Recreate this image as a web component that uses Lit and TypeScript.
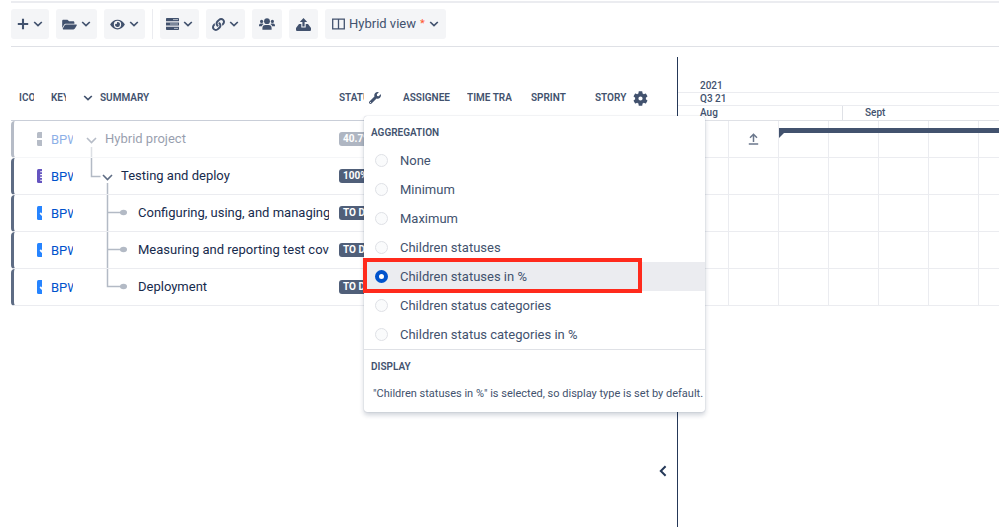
import { LitElement, html, css, svg, nothing } from "lit";
import { customElement, property, state } from "lit/decorators.js";
import { classMap } from "lit/directives/class-map.js";

const icons: Record<string, { box: string; w: number; h: number; art: unknown }> = {
  plus: { box: "0 0 12 12", w: 12, h: 12, art: svg`<path d="M6 .8v10.4M.8 6h10.4" stroke="currentColor" stroke-width="2.1" fill="none"/>` },
  chevron: { box: "0 0 10 6", w: 10, h: 6, art: svg`<path d="M1.2 1 5 4.6 8.8 1" stroke="currentColor" stroke-width="1.7" fill="none"/>` },
  left: { box: "0 0 8 12", w: 8, h: 12, art: svg`<path d="M6.6 1.2 1.8 6l4.8 4.8" stroke="currentColor" stroke-width="2" fill="none"/>` },
  folder: { box: "0 0 576 512", w: 15, h: 13, art: svg`<path d="M572.694 292.093L500.27 416.248A63.997 63.997 0 0 1 444.989 448H45.025c-18.523 0-30.064-20.093-20.731-36.093l72.424-124.155A64 64 0 0 1 152 256h399.964c18.523 0 30.064 20.093 20.73 36.093zM152 224h328v-48c0-26.51-21.49-48-48-48H272l-64-64H48C21.49 64 0 85.49 0 112v278.046l69.077-118.418C86.214 242.25 117.989 224 152 224z"/>` },
  eye: { box: "0 0 576 512", w: 15, h: 13, art: svg`<path d="M572.52 241.4C518.29 135.59 410.93 64 288 64S57.68 135.64 3.48 241.41a32.35 32.35 0 0 0 0 29.19C57.71 376.41 165.07 448 288 448s230.32-71.64 284.52-177.41a32.35 32.35 0 0 0 0-29.19zM288 400a144 144 0 1 1 144-144 143.93 143.93 0 0 1-144 144zm0-240a95.31 95.31 0 0 0-25.31 3.79 47.85 47.85 0 0 1-66.9 66.9A95.78 95.78 0 1 0 288 160z"/>` },
  rows: { box: "0 0 13 12", w: 13, h: 12, art: svg`<path d="M0 .8Q0 0 .8 0h11.4q.8 0 .8.8v2.4H0zM0 4.4h13v3.2H0zM0 8.8h13v2.4q0 .8-.8.8H.8Q0 12 0 11.2z"/><path d="M7 1.6h5M4 6h8M8 10.4h4" stroke="#c1c7d0" stroke-width=".9"/>` },
  link: { box: "0 0 512 512", w: 13, h: 13, art: svg`<path d="M326.612 185.391c59.747 59.809 58.927 155.698.36 214.59-.11.12-.24.25-.36.37l-67.2 67.2c-59.27 59.27-155.699 59.262-214.96 0-59.27-59.26-59.27-155.7 0-214.96l37.106-37.106c9.84-9.84 26.786-3.3 27.294 10.606.648 17.722 3.826 35.527 9.69 52.721 1.986 5.822.567 12.262-3.783 16.612l-13.087 13.087c-28.026 28.026-28.905 73.66-1.155 101.96 28.024 28.579 74.086 28.749 102.325.51l67.2-67.19c28.191-28.191 28.073-73.757 0-101.83-3.701-3.694-7.429-6.564-10.341-8.569a16.037 16.037 0 0 1-6.947-12.606c-.396-10.567 3.348-21.456 11.698-29.806l21.054-21.055c5.521-5.521 14.182-6.199 20.584-1.731a152.482 152.482 0 0 1 20.522 17.197zM467.547 44.449c-59.261-59.262-155.69-59.27-214.96 0l-67.2 67.2c-.12.12-.25.25-.36.37-58.566 58.892-59.387 154.781.36 214.59a152.454 152.454 0 0 0 20.521 17.196c6.402 4.468 15.064 3.789 20.584-1.731l21.054-21.055c8.35-8.35 12.094-19.239 11.698-29.806a16.037 16.037 0 0 0-6.947-12.606c-2.912-2.005-6.64-4.875-10.341-8.569-28.073-28.073-28.191-73.639 0-101.83l67.2-67.19c28.239-28.239 74.3-28.069 102.325.51 27.75 28.3 26.872 73.934-1.155 101.96l-13.087 13.087c-4.35 4.35-5.769 10.79-3.783 16.612 5.864 17.194 9.042 34.999 9.69 52.721.509 13.906 17.454 20.446 27.294 10.606l37.106-37.106c59.271-59.259 59.271-155.699.001-214.959z"/>` },
  users: { box: "0 0 16 12", w: 16, h: 12, art: svg`<circle cx="8" cy="3.2" r="2.9"/><circle cx="2.6" cy="3.4" r="1.6"/><circle cx="13.4" cy="3.4" r="1.6"/><path d="M3.4 11.8v-1.6q0-3.2 3-3.2h3.2q3 0 3 3.2v1.6zM0 8.3V7.4q0-1.8 1.8-1.8h1.8q.6 0 1 .3-1.5.8-1.8 2.4zM16 8.3V7.4q0-1.8-1.8-1.8h-1.8q-.6 0-1 .3 1.5.8 1.8 2.4z"/>` },
  share: { box: "0 0 15 13", w: 15, h: 13, art: svg`<path d="M7.5 0 11.200 4H8.600v4.600H6.400V4H3.800zM3 6h2.300v3.600h4.400V6H12l3 4v1.900q0 1.100-1.100 1.100H1.100Q0 13 0 11.900V10z"/>` },
  columns: { box: "0 0 13 12", w: 13, h: 12, art: svg`<path d="M.7 1.100h11.600v9.800H.7zM6.500 1v10" fill="none" stroke="currentColor" stroke-width="1.300"/>` },
  wrench: { box: "0 0 512 512", w: 12, h: 12, art: svg`<path d="M507.73 109.1c-2.24-9.03-13.54-12.09-20.12-5.51l-74.36 74.36-67.88-11.31-11.31-67.88 74.36-74.36c6.62-6.62 3.43-17.9-5.66-20.16-47.38-11.74-99.55.91-136.58 37.93-39.64 39.64-50.55 97.1-34.05 147.2L18.74 402.76c-24.99 24.99-24.99 65.51 0 90.5 24.99 24.99 65.51 24.99 90.5 0l213.21-213.21c50.12 16.71 107.47 5.68 147.37-34.22 37.07-37.07 49.7-89.32 37.91-136.73zM64 472c-13.25 0-24-10.75-24-24 0-13.26 10.75-24 24-24s24 10.740 24 24c0 13.250-10.750 24-24 24z"/>` },
  gear: { box: "2 2 20 20", w: 15, h: 15, art: svg`<path d="M19.140 12.940c.04-.3.06-.61.06-.94 0-.32-.02-.64-.07-.94l2.030-1.580a.49.49 0 0 0 .12-.61l-1.920-3.320a.488.488 0 0 0-.59-.22l-2.390.96c-.5-.38-1.030-.7-1.620-.94l-.36-2.540a.484.484 0 0 0-.48-.41h-3.840c-.24 0-.43.17-.47.41l-.36 2.540c-.59.24-1.130.57-1.620.94l-2.390-.96c-.22-.08-.47 0-.59.22L2.740 8.870c-.12.21-.08.47.12.61l2.030 1.580c-.05.3-.09.63-.09.94s.02.64.07.94l-2.030 1.580a.49.49 0 0 0-.12.61l1.920 3.320c.12.22.37.29.59.22l2.390-.96c.5.38 1.030.7 1.620.94l.36 2.540c.05.24.24.41.48.41h3.840c.24 0 .44-.17.47-.41l.36-2.540c.59-.24 1.130-.56 1.620-.94l2.390.96c.22.08.47 0 .59-.22l1.920-3.320c.12-.22.07-.47-.12-.61zM12 14.800A2.800 2.800 0 1 1 12 9.200a2.800 2.800 0 0 1 0 5.600z"/>` },
  upload: { box: "0 0 11 12", w: 11, h: 12, art: svg`<path d="M5.500 9V1.500M2 4.800 5.500 1.300 9 4.800M.8 11h9.400" fill="none" stroke="currentColor" stroke-width="1.500"/>` },
  project: { box: "0 0 14 14", w: 14, h: 14, art: svg`<path d="M1.500 0H6v6H0V1.500Q0 0 1.500 0zM0 8h6v6H1.500Q0 14 0 12.500zM8 0h6v6H8zM8 8h6v6H8z" fill="#5e6c84"/>` },
  epic: { box: "0 0 14 14", w: 14, h: 14, art: svg`<rect width="14" height="14" rx="1.500" fill="#6554c0"/><path d="M3.200 2.800h8M3.200 5.600h8M3.200 8.400h8M3.200 11.200h8" stroke="#fff" stroke-width="1.100"/>` },
  task: { box: "0 0 14 14", w: 14, h: 14, art: svg`<rect width="14" height="14" rx="1.500" fill="#2684ff"/><path d="m3.200 7 2.600 2.600 5-5.200" fill="none" stroke="#fff" stroke-width="1.800"/>` },
};

const icon = (name: string) => {
  const i = icons[name];
  return html`<svg width=${i.w} height=${i.h} viewBox=${i.box} fill="currentColor" aria-hidden="true">${i.art}</svg>`;
};

interface Issue {
  type: string;
  key: string;
  summary: string;
  status: string;
  depth: number;
  last?: boolean;
  faded?: boolean;
}

const issues: Issue[] = [
  { type: "project", key: "BPW-1", summary: "Hybrid project", status: "40.7%", depth: 0, faded: true },
  { type: "epic", key: "BPW-2", summary: "Testing and deploy", status: "100%", depth: 1 },
  { type: "task", key: "BPW-3", summary: "Configuring, using, and managing test tools", status: "TO DO", depth: 2 },
  { type: "task", key: "BPW-4", summary: "Measuring and reporting test coverage", status: "TO DO", depth: 2 },
  { type: "task", key: "BPW-5", summary: "Deployment", status: "TO DO", depth: 2, last: true },
];

const treeWidths = [22, 38, 55];

const tree = (issue: Issue) => {
  const art = [
    svg`<path class="line" d="M8.500 26v10"/><path class="arrow" d="m4 17 4.500 4.500L13 17"/>`,
    svg`<path class="line" d="M8.500 0v18.500h9M24.500 25v11"/><path class="arrow" d="m20 17 4.500 4.500L29 17"/>`,
    svg`<path class="line" d=${issue.last ? "M24.500 0v17.500h14" : "M24.500 0v36M24.500 17.500h14"}/><ellipse class="dot" cx="40.500" cy="17.500" rx="3.500" ry="2.800"/>`,
  ];
  const w = treeWidths[issue.depth];
  return html`<svg class="tree" width=${w} height="36" viewBox="0 0 ${w} 36" aria-hidden="true">${art[issue.depth]}</svg>`;
};

@customElement("tool-bar")
class ToolBar extends LitElement {
  static styles = css`
    :host { display: block; }
    .bar {
      display: flex;
      align-items: center;
      border-top: 2px solid #ebecf0;
      border-bottom: 1px solid #dfe1e6;
      padding: 6px 0 7px;
      gap: 7px;
    }
    .button {
      display: flex;
      align-items: center;
      justify-content: center;
      gap: 4px;
      height: 30px;
      padding: 0 6px;
      border: 0;
      border-radius: 3px;
      background: #f4f5f7;
      color: #42526e;
      font: 13px/20px Roboto, sans-serif;
    }
    .single { padding: 0 7px; }
    .button svg { flex: none; }
    .divider { width: 1px; height: 30px; background: #ebecf0; }
    .star { color: #ff5630; font-size: 11px; }
  `;

  render() {
    const menu = (name: string, label: string) =>
      html`<button class="button" aria-label=${label}>${icon(name)}${icon("chevron")}</button>`;
    return html`
      <div class="bar" role="toolbar">
        ${menu("plus", "Add")}${menu("folder", "Open")}${menu("eye", "Show")}
        <span class="divider"></span>
        ${menu("rows", "Rows")}${menu("link", "Links")}
        <button class="button single" aria-label="Resources">${icon("users")}</button>
        <button class="button single" aria-label="Export">${icon("share")}</button>
        <button class="button single">${icon("columns")}<span>Hybrid view</span><span class="star">*</span>${icon("chevron")}</button>
      </div>
    `;
  }
}

@customElement("aggregation-menu")
class AggregationMenu extends LitElement {
  @state() selected = "Children statuses in %";

  options = [
    "None",
    "Minimum",
    "Maximum",
    "Children statuses",
    "Children statuses in %",
    "Children status categories",
    "Children status categories in %",
  ];

  static styles = css`
    :host {
      display: block;
      box-sizing: border-box;
      background: #fff;
      border-radius: 3px;
      box-shadow: 0 0 1px rgba(9, 30, 66, 0.35), 0 3px 5px rgba(9, 30, 66, 0.2);
      color: #42526e;
      font: 13px/16px Roboto, sans-serif;
      text-align: left;
      white-space: nowrap;
    }
    .group { margin: 0; padding: 0; border: 0; border-bottom: 1px solid #dfe1e6; }
    .title { margin: 0; padding: 9px 7px 5px; font-size: 10px; line-height: 16px; font-weight: 600; }
    .legend { float: left; width: 100%; box-sizing: border-box; }
    .option { position: relative; clear: both; display: flex; align-items: center; gap: 12px; height: 29px; padding-left: 11px; }
    .chosen { background: #ebecf0; }
    .radio {
      appearance: none;
      box-sizing: border-box;
      width: 13px;
      height: 13px;
      margin: 0;
      border: 1px solid #dfe1e6;
      border-radius: 50%;
      background: #fafbfc;
    }
    .radio:checked { border: 4px solid #0052cc; background: #fff; }
    .frame {
      position: absolute;
      left: -1px;
      right: 63px;
      top: -4px;
      bottom: -2px;
      border: 4px solid #ff2a1c;
      pointer-events: none;
    }
    .note { margin: 0; padding: 6px 9px 10px; font-size: 11px; line-height: 16px; }
  `;

  render() {
    return html`
      <fieldset class="group">
        <legend class="title legend">AGGREGATION</legend>
        ${this.options.map((name) => {
          const chosen = name === this.selected;
          return html`<label class=${classMap({ option: true, chosen })}>
            <input class="radio" type="radio" name="aggregation" .checked=${chosen} @change=${() => (this.selected = name)} />
            <span>${name}</span>${chosen ? html`<span class="frame"></span>` : nothing}
          </label>`;
        })}
      </fieldset>
      <h2 class="title">DISPLAY</h2>
      <p class="note">"${this.selected}" is selected, so display type is set by default.</p>
    `;
  }
}

@customElement("issue-table")
class IssueTable extends LitElement {
  @property({ attribute: false }) rows: Issue[] = [];

  static styles = css`
    :host { display: block; }
    .table { table-layout: fixed; width: 666px; border-collapse: separate; border-spacing: 0; }
    .narrow { width: 32px; }
    .wide { width: 256px; }
    .mid { width: 64px; }
    .head {
      position: relative;
      height: 49px;
      padding: 0 0 14px 8px;
      vertical-align: bottom;
      border-bottom: 1px solid #c9ced8;
      color: #42526e;
      font: 600 10px/16px Roboto, sans-serif;
      text-align: left;
      white-space: nowrap;
    }
    .label { display: flex; align-items: center; gap: 7px; height: 16px; }
    .clip { overflow: hidden; }
    .w15 { width: 15px; }
    .w25 { width: 25px; }
    .w45 { width: 45px; }
    .gear, .wrench { display: flex; padding: 0; border: 0; background: none; color: #42526e; }
    .wrench { margin-left: -2px; }
    .menu { position: absolute; left: 33px; top: 59px; width: 341px; z-index: 5; }
    .cell { height: 36px; padding: 0; border-bottom: 1px solid #ebecf0; white-space: nowrap; }
    .faded { opacity: 0.45; }
    .first { border-left: 3px solid #5e6c84; border-radius: 4px 0 0 4px; padding-left: 23px; }
    .type { display: flex; width: 5px; overflow: hidden; }
    .type svg { flex: none; }
    .key { display: block; width: 22px; margin-left: 8px; padding-top: 2px; overflow: hidden; color: #0052cc; text-decoration: none; font: 13px/20px Roboto, sans-serif; }
    .summary { display: flex; align-items: center; width: 246px; margin-left: 8px; overflow: hidden; color: #172b4d; font: 13px/20px Roboto, sans-serif; }
    .tree { flex: none; }
    .line { fill: none; stroke: #b3bac5; stroke-width: 1.5; }
    .arrow { fill: none; stroke: #5e6c84; stroke-width: 1.6; }
    .dot { fill: #b3bac5; }
    .status { display: block; width: max-content; margin-left: 8px; padding: 0 4px; border-radius: 3px; background: #505f79; color: #fff; font: 700 10px/14px Roboto, sans-serif; }
  `;

  render() {
    return html`
      <table class="table">
        <colgroup>
          <col class="narrow" /><col class="narrow" /><col class="wide" />
          <col class="mid" /><col class="mid" /><col class="mid" /><col class="mid" /><col />
        </colgroup>
        <thead>
          <tr>
            <th class="head"><div class="clip w15">ICON</div></th>
            <th class="head"><div class="clip w15">KEY</div></th>
            <th class="head"><div class="label">${icon("chevron")}SUMMARY</div></th>
            <th class="head">
              <div class="label"><span class="clip w25">STATUS</span><button class="wrench" aria-label="Column settings">${icon("wrench")}</button></div>
              <aggregation-menu class="menu"></aggregation-menu>
            </th>
            <th class="head">ASSIGNEE</th>
            <th class="head"><div class="clip w45">TIME TRACKING</div></th>
            <th class="head">SPRINT</th>
            <th class="head"><div class="label">STORY<button class="gear" aria-label="Columns">${icon("gear")}</button></div></th>
          </tr>
        </thead>
        <tbody>
          ${this.rows.map(
            (r) => html`<tr class=${classMap({ faded: !!r.faded })}>
              <td class="cell first"><span class="type">${icon(r.type)}</span></td>
              <td class="cell"><a class="key" href="#${r.key}">${r.key}</a></td>
              <td class="cell"><div class="summary">${tree(r)}${r.summary}</div></td>
              <td class="cell"><span class="status">${r.status}</span></td>
              <td class="cell" colspan="4"></td>
            </tr>`
          )}
        </tbody>
      </table>
    `;
  }
}

@customElement("gantt-chart")
class GanttChart extends LitElement {
  @property({ type: Number }) rows = 0;

  static styles = css`
    :host { display: block; min-width: 0; overflow: hidden; color: #42526e; font: 500 10px/13px Roboto, sans-serif; }
    .scale { border-bottom: 1px solid #ebecf0; padding-left: 22px; }
    .year { padding-top: 22px; }
    .quarter { line-height: 12px; }
    .months { display: flex; height: 14px; border-bottom: 1px solid #dfe1e6; }
    .month { width: 142px; padding-left: 22px; border-right: 1px solid #dfe1e6; }
    .rest { flex: 1; padding-left: 22px; }
    .body { position: relative; }
    .row { display: flex; height: 36px; padding-left: 1px; border-bottom: 1px solid #ebecf0; }
    .week { flex: none; display: flex; align-items: center; justify-content: center; box-sizing: border-box; width: 50px; border-right: 1px solid #ebecf0; color: #6b778c; }
    .span { position: absolute; left: 101px; right: 0; top: 7px; height: 5px; background: #42526e; }
    .span::before { content: ""; position: absolute; left: 0; top: 5px; border-top: 5px solid #42526e; border-right: 5px solid transparent; }
  `;

  render() {
    return html`
      <div class="scale year">2021</div>
      <div class="scale quarter">Q3 21</div>
      <div class="months"><span class="month">Aug</span><span class="rest">Sept</span></div>
      <div class="body">
        ${Array.from({ length: this.rows }, (_, y) => html`<div class="row">
          ${Array.from({ length: 40 }, (_, x) => html`<span class="week">${y === 0 && x === 1 ? icon("upload") : nothing}</span>`)}
        </div>`)}
        <span class="span"></span>
      </div>
    `;
  }
}

@customElement("app-root")
class AppRoot extends LitElement {
  static styles = css`
    :host { display: flex; flex-direction: column; box-sizing: border-box; min-height: 100vh; padding: 1px 0 0 11px; background: #fff; overflow: hidden; font-family: Roboto, sans-serif; }
    .split { flex: 1; display: flex; margin-top: 10px; }
    .list { flex: none; display: flex; flex-direction: column; justify-content: space-between; border-right: 1px solid #253858; }
    .collapse { align-self: flex-end; display: flex; margin: 0 10px 50px; padding: 0; border: 0; background: none; color: #253858; }
    .chart { flex: 1; }
  `;

  render() {
    return html`
      <tool-bar></tool-bar>
      <main class="split">
        <section class="list">
          <issue-table .rows=${issues}></issue-table>
          <button class="collapse" aria-label="Collapse list">${icon("left")}</button>
        </section>
        <gantt-chart class="chart" .rows=${issues.length}></gantt-chart>
      </main>
    `;
  }
}
